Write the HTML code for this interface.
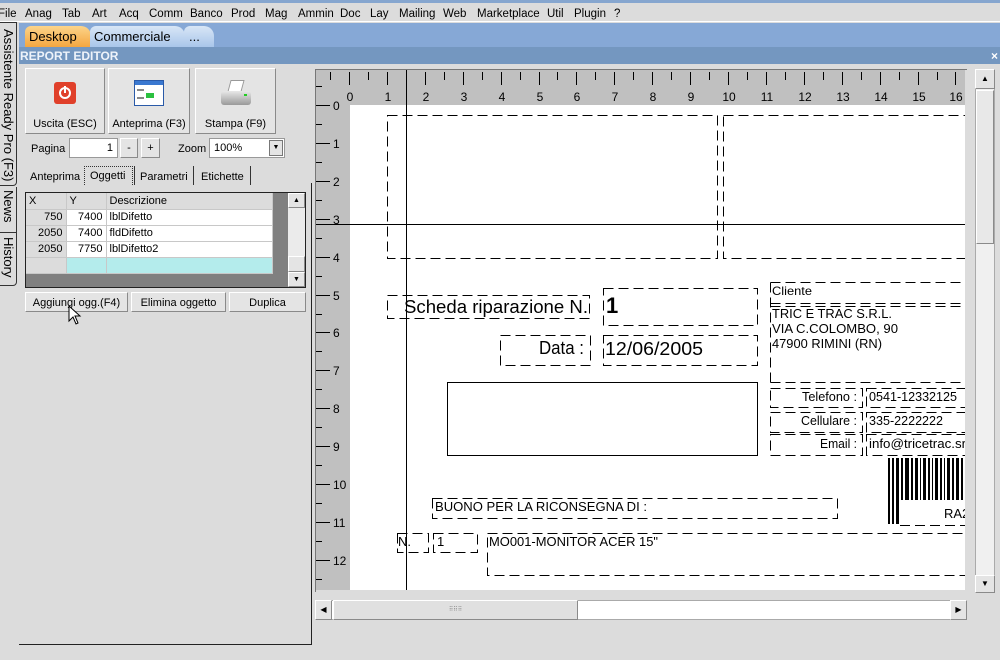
<!DOCTYPE html>
<html><head><meta charset="utf-8"><style>
*{box-sizing:border-box;margin:0;padding:0}
body{width:1000px;height:660px;overflow:hidden;background:#dcdcdc;font-family:"Liberation Sans",sans-serif;font-size:11px;color:#000;position:relative}
.a{position:absolute}
.menu span{position:absolute;top:5px;font-size:11.5px}
.btn{position:absolute;background:#e4e4e4;border:1px solid;border-color:#fff #8a8a8a #8a8a8a #fff;text-align:center}
.vt{position:absolute;writing-mode:vertical-rl;font-size:13px;left:1px}
td{height:16px;border-bottom:1px solid #c8c8c8;border-right:1px solid #c8c8c8;padding:0 3px;font-size:11px}
.ic{height:34px;position:relative;margin-top:9px}
.lb{margin-top:6px}
</style></head><body>
<div class="a" style="left:0;top:0;width:1000px;height:3px;background:#86a6cf"></div>
<div class="a menu" style="left:0;top:3px;width:1000px;height:19px;background:#dcdcdc;border-bottom:1px solid #fff">
<span style="left:-2px">File</span><span style="left:25px">Anag</span><span style="left:62px">Tab</span><span style="left:92px">Art</span><span style="left:119px">Acq</span><span style="left:149px">Comm</span><span style="left:190px">Banco</span><span style="left:231px">Prod</span><span style="left:265px">Mag</span><span style="left:298px">Ammin</span><span style="left:340px">Doc</span><span style="left:370px">Lay</span><span style="left:399px">Mailing</span><span style="left:443px">Web</span><span style="left:477px">Marketplace</span><span style="left:547px">Util</span><span style="left:574px">Plugin</span><span style="left:614px">?</span>
</div>
<div class="a" style="left:19px;top:23px;width:981px;height:24px;background:#86a8d6"></div>
<div class="a" style="left:25px;top:26px;width:66px;height:21px;background:linear-gradient(#fcd48a,#f4a640);border-radius:6px 10px 0 0;font-size:13px;padding:3px 0 0 4px">Desktop</div>
<div class="a" style="left:90px;top:26px;width:95px;height:21px;background:linear-gradient(#d8e6f6,#a9c6ea);border-radius:6px 10px 0 0;font-size:13px;padding:3px 0 0 4px">Commerciale</div>
<div class="a" style="left:184px;top:26px;width:30px;height:21px;background:linear-gradient(#d8e6f6,#a9c6ea);border-radius:6px 10px 0 0;font-size:13px;padding:3px 0 0 5px">...</div>
<div class="a" style="left:19px;top:47px;width:981px;height:17px;background:#7497c0;color:#eef3fa;font-weight:bold;font-size:12px;padding:2px 0 0 1px">REPORT EDITOR</div>
<div class="a" style="left:991px;top:49px;color:#fff;font-weight:bold;font-size:12px">×</div>
<!-- side tabs -->
<div class="a" style="left:0;top:22px;width:18px;height:638px;background:#dcdcdc"></div>
<div class="a" style="left:0;top:22px;width:17px;height:164px;border:1px solid #333;border-left:none;border-radius:0 0 4px 0"></div>
<div class="vt" style="top:29px">Assistente Ready Pro (F3)</div>
<div class="a" style="left:0;top:187px;width:17px;height:45px;border-right:1px solid #333"></div>
<div class="vt" style="top:190px">News</div>
<div class="a" style="left:0;top:232px;width:17px;height:54px;border:1px solid #333;border-left:none;border-radius:0 0 4px 0"></div>
<div class="vt" style="top:237px">History</div>
<!-- panel -->
<div class="a" style="left:19px;top:183px;width:293px;height:462px;border-right:1px solid #222;border-bottom:1px solid #222"></div>
<div class="btn" style="left:25px;top:68px;width:80px;height:66px"><div class="ic"><div style="position:absolute;left:28px;top:4px;width:22px;height:22px;background:#e0402a;border-radius:3px"><div style="position:absolute;left:5px;top:5px;width:12px;height:12px;border:2px solid #fff;border-radius:50%"></div><div style="position:absolute;left:10px;top:4px;width:2px;height:7px;background:#fff"></div></div></div><div class="lb">Uscita (ESC)</div></div>
<div class="btn" style="left:108px;top:68px;width:82px;height:66px"><div class="ic"><div style="position:absolute;left:25px;top:2px;width:30px;height:26px;border:1px solid #2a5aa8;background:#fff"><div style="height:4px;background:#3a78d0"></div><div style="position:absolute;left:11px;top:12px;width:8px;height:5px;background:#2bc040"></div><div style="position:absolute;left:2px;top:8px;width:7px;height:10px;border-top:2px solid #888;border-bottom:2px solid #888"></div></div></div><div class="lb">Anteprima (F3)</div></div>
<div class="btn" style="left:195px;top:68px;width:81px;height:66px"><div class="ic"><div style="position:absolute;left:33px;top:2px;width:14px;height:12px;background:#fff;border:1px solid #999;transform:skewX(-15deg)"></div><div style="position:absolute;left:25px;top:13px;width:30px;height:14px;background:linear-gradient(#e8e8e8,#9a9a9a);border-radius:3px"></div><div style="position:absolute;left:48px;top:16px;width:3px;height:2px;background:#2c2"></div></div><div class="lb">Stampa (F9)</div></div>
<div class="a" style="left:31px;top:143px">Pagina</div>
<div class="a" style="left:69px;top:138px;width:49px;height:20px;background:#fff;border:1px solid #999;text-align:right;padding:3px 4px 0 0">1</div>
<div class="btn" style="left:120px;top:138px;width:18px;height:20px;padding-top:3px">-</div>
<div class="btn" style="left:141px;top:138px;width:19px;height:20px;padding-top:3px">+</div>
<div class="a" style="left:178px;top:143px">Zoom</div>
<div class="a" style="left:209px;top:138px;width:76px;height:20px;background:#fff;border:1px solid #999;padding:3px 0 0 4px">100%<div style="position:absolute;right:1px;top:1px;width:14px;height:16px;background:#e4e4e4;border:1px solid #777;font-size:7px;text-align:center;padding-top:3px">▼</div></div>
<div class="a" style="left:30px;top:171px">Anteprima</div>
<div class="a" style="left:84px;top:166px;width:49px;height:19px;border:1px dotted #333;border-bottom:none;padding:3px 0 0 5px">Oggetti</div>
<div class="a" style="left:134px;top:166px;width:1px;height:19px;background:#333"></div>
<div class="a" style="left:140px;top:171px">Parametri</div>
<div class="a" style="left:193px;top:166px;width:1px;height:19px;background:#333"></div>
<div class="a" style="left:201px;top:171px">Etichette</div>
<div class="a" style="left:250px;top:166px;width:1px;height:19px;background:#333"></div>
<div class="a" style="left:25px;top:192px;width:281px;height:96px;background:#808080;border:1px solid #222"></div>
<table class="a" style="left:26px;top:193px;width:247px;border-collapse:collapse;background:#fff">
<tr style="background:#dcdcdc"><td style="width:40px;height:15px">X</td><td style="width:40px">Y</td><td>Descrizione</td></tr>
<tr><td style="background:#dcdcdc;text-align:right">750</td><td style="text-align:right">7400</td><td>lblDifetto</td></tr>
<tr><td style="background:#dcdcdc;text-align:right">2050</td><td style="text-align:right">7400</td><td>fldDifetto</td></tr>
<tr><td style="background:#dcdcdc;text-align:right">2050</td><td style="text-align:right">7750</td><td>lblDifetto2</td></tr>
<tr><td style="background:#dcdcdc"></td><td style="background:#b4ecec"></td><td style="background:#b4ecec"></td></tr>
</table>
<div class="a" style="left:288px;top:193px;width:17px;height:94px;background:#ebebeb"></div>
<div class="btn" style="left:288px;top:193px;width:17px;height:15px;font-size:7px;padding-top:3px">▲</div>
<div class="btn" style="left:288px;top:256px;width:17px;height:16px"></div>
<div class="btn" style="left:288px;top:272px;width:17px;height:15px;font-size:7px;padding-top:3px">▼</div>
<div class="btn" style="left:25px;top:292px;width:103px;height:20px;padding-top:4px">Aggiungi ogg.(F4)</div>
<div class="btn" style="left:131px;top:292px;width:95px;height:20px;padding-top:4px">Elimina oggetto</div>
<div class="btn" style="left:229px;top:292px;width:77px;height:20px;padding-top:4px">Duplica</div>
<svg class="a" style="left:68px;top:305px" width="14" height="22"><path d="M1 1 L1 16 L5 12 L8 19 L10 18 L7 11 L12 11 Z" fill="#fff" stroke="#000"/></svg>
<!-- canvas -->
<div class="a" style="left:315px;top:69px;width:652px;height:523px;border-top:1px solid #777;border-left:1px solid #777"></div>
<div class="a" style="left:975px;top:69px;width:20px;height:524px;background:#f0f0f0;border:1px solid #aaa"></div>
<div class="btn" style="left:975px;top:69px;width:20px;height:20px;font-size:8px;padding-top:4px">▲</div>
<div class="btn" style="left:976px;top:90px;width:18px;height:154px;background:#e8e8e8"></div>
<div class="btn" style="left:975px;top:575px;width:20px;height:18px;font-size:8px;padding-top:3px">▼</div>
<div class="a" style="left:315px;top:600px;width:652px;height:20px;background:#fff;border:1px solid #aaa"></div>
<div class="btn" style="left:315px;top:600px;width:17px;height:20px;font-size:8px;padding-top:4px">◀</div>
<div class="btn" style="left:333px;top:600px;width:245px;height:20px;background:#e0e0e0;font-size:6px;padding-top:5px;color:#888">⠿⠿⠿</div>
<div class="btn" style="left:950px;top:600px;width:17px;height:20px;font-size:8px;padding-top:4px">▶</div>
<svg class="a" style="left:0;top:0" width="1000" height="660">
<defs><clipPath id="c"><rect x="316" y="70" width="649" height="520"/></clipPath></defs>
<g clip-path="url(#c)" font-family="Liberation Sans Narrow, Liberation Sans, sans-serif">
<rect x="316" y="70" width="649" height="520" fill="#c0c0c0"/>
<rect x="350" y="105" width="615" height="485" fill="#fff"/>
<g stroke="#000" stroke-width="1">
<path d="M349.5 72V85M387.5 72V85M425.5 72V85M463.5 72V85M501.5 72V85M539.5 72V85M576.5 72V85M614.5 72V85M652.5 72V85M690.5 72V85M728.5 72V85M766.5 72V85M804.5 72V85M842.5 72V85M880.5 72V85M918.5 72V85M955.5 72V85M330.5 72V80M368.5 72V80M406.5 72V80M444.5 72V80M482.5 72V80M520.5 72V80M557.5 72V80M595.5 72V80M633.5 72V80M671.5 72V80M709.5 72V80M747.5 72V80M785.5 72V80M823.5 72V80M861.5 72V80M899.5 72V80M937.5 72V80"/>
<path d="M316 105.5H330M316 143.5H330M316 181.5H330M316 219.5H330M316 257.5H330M316 295.5H330M316 332.5H330M316 370.5H330M316 408.5H330M316 446.5H330M316 484.5H330M316 522.5H330M316 560.5H330M316 86.5H322M316 124.5H322M316 162.5H322M316 200.5H322M316 238.5H322M316 276.5H322M316 314.5H322M316 351.5H322M316 389.5H322M316 427.5H322M316 465.5H322M316 503.5H322M316 541.5H322M316 579.5H322"/>
</g>
<g font-size="12" text-anchor="middle">
<text x="350" y="101">0</text><text x="388" y="101">1</text><text x="426" y="101">2</text><text x="464" y="101">3</text><text x="502" y="101">4</text><text x="540" y="101">5</text><text x="577" y="101">6</text><text x="615" y="101">7</text><text x="653" y="101">8</text><text x="691" y="101">9</text><text x="729" y="101">10</text><text x="767" y="101">11</text><text x="805" y="101">12</text><text x="843" y="101">13</text><text x="881" y="101">14</text><text x="919" y="101">15</text><text x="956" y="101">16</text>
</g>
<g font-size="12">
<text x="333" y="110">0</text><text x="333" y="148">1</text><text x="333" y="186">2</text><text x="333" y="224">3</text><text x="333" y="262">4</text><text x="333" y="300">5</text><text x="333" y="337">6</text><text x="333" y="375">7</text><text x="333" y="413">8</text><text x="333" y="451">9</text><text x="333" y="489">10</text><text x="333" y="527">11</text><text x="333" y="565">12</text>
</g>
<g fill="none" stroke="#000" stroke-dasharray="10,5">
<rect x="387.5" y="115.5" width="330" height="143"/>
<rect x="723.5" y="115.5" width="260" height="143"/>
<rect x="387.5" y="295.5" width="202" height="23"/>
<rect x="603.5" y="288.5" width="154" height="37"/>
<rect x="500.5" y="335.5" width="90" height="30"/>
<rect x="603.5" y="335.5" width="154" height="30"/>
<path d="M770.5 282.5H980M770.5 303.5H980M770.5 306.5H980M770.5 382.5H980M770.5 282.5V382.5"/>
<rect x="770.5" y="388.5" width="92" height="19"/><rect x="866.5" y="388.5" width="110" height="19"/>
<rect x="770.5" y="412.5" width="92" height="20"/><rect x="866.5" y="412.5" width="110" height="20"/>
<rect x="770.5" y="434.5" width="92" height="21"/><rect x="866.5" y="434.5" width="110" height="21"/>
<rect x="432.5" y="498.5" width="405" height="20"/>
<rect x="397.5" y="533.5" width="31" height="19"/>
<rect x="433.5" y="533.5" width="44" height="19"/>
<rect x="487.5" y="533.5" width="490" height="42"/>
<path d="M900 525.5H980"/>
</g>
<rect x="447.5" y="382.5" width="310" height="73" fill="none" stroke="#000"/>
<g fill="#000">
<rect x="888" y="458" width="2" height="66"/><rect x="892" y="458" width="2" height="66"/><rect x="896" y="458" width="3" height="66"/><rect x="901" y="458" width="2" height="42"/><rect x="905" y="458" width="4" height="42"/><rect x="911" y="458" width="2" height="42"/><rect x="915" y="458" width="3" height="42"/><rect x="920" y="458" width="1" height="42"/><rect x="923" y="458" width="3" height="42"/><rect x="928" y="458" width="2" height="42"/><rect x="932" y="458" width="1" height="42"/><rect x="935" y="458" width="3" height="42"/><rect x="940" y="458" width="2" height="42"/><rect x="944" y="458" width="1" height="42"/><rect x="947" y="458" width="3" height="42"/><rect x="952" y="458" width="2" height="42"/><rect x="956" y="458" width="3" height="42"/><rect x="961" y="458" width="2" height="42"/>
</g>
<text x="404" y="313" font-size="18" textLength="184" lengthAdjust="spacingAndGlyphs">Scheda riparazione N.</text>
<text x="606" y="313" font-size="22" font-weight="bold">1</text>
<text x="772" y="295" font-size="12" textLength="40" lengthAdjust="spacingAndGlyphs">Cliente</text>
<g font-size="13">
<text x="772" y="318" textLength="120" lengthAdjust="spacingAndGlyphs">TRIC E TRAC S.R.L.</text>
<text x="772" y="333" textLength="126" lengthAdjust="spacingAndGlyphs">VIA C.COLOMBO, 90</text>
<text x="772" y="348" textLength="110" lengthAdjust="spacingAndGlyphs">47900 RIMINI (RN)</text>
<text x="802" y="401" textLength="55" lengthAdjust="spacingAndGlyphs">Telefono :</text>
<text x="869" y="401" textLength="88" lengthAdjust="spacingAndGlyphs">0541-12332125</text>
<text x="801" y="425" textLength="56" lengthAdjust="spacingAndGlyphs">Cellulare :</text>
<text x="869" y="425" textLength="74" lengthAdjust="spacingAndGlyphs">335-2222222</text>
<text x="820" y="448" textLength="37" lengthAdjust="spacingAndGlyphs">Email :</text>
<text x="869" y="448" textLength="100" lengthAdjust="spacingAndGlyphs">info@tricetrac.srl</text>
<text x="944" y="518">RA2</text>
<text x="435" y="511" textLength="212" lengthAdjust="spacingAndGlyphs">BUONO PER LA RICONSEGNA DI :</text>
<text x="398" y="546">N.</text>
<text x="437" y="546">1</text>
<text x="489" y="546" textLength="169" lengthAdjust="spacingAndGlyphs">MO001-MONITOR ACER 15"</text>
</g>
<text x="539" y="354" font-size="18" textLength="45" lengthAdjust="spacingAndGlyphs">Data :</text>
<text x="605" y="355" font-size="18" textLength="98" lengthAdjust="spacingAndGlyphs">12/06/2005</text>
<path d="M406.5 70V590M316 224.5H965" stroke="#000"/>
</g>
</svg>
</body></html>
